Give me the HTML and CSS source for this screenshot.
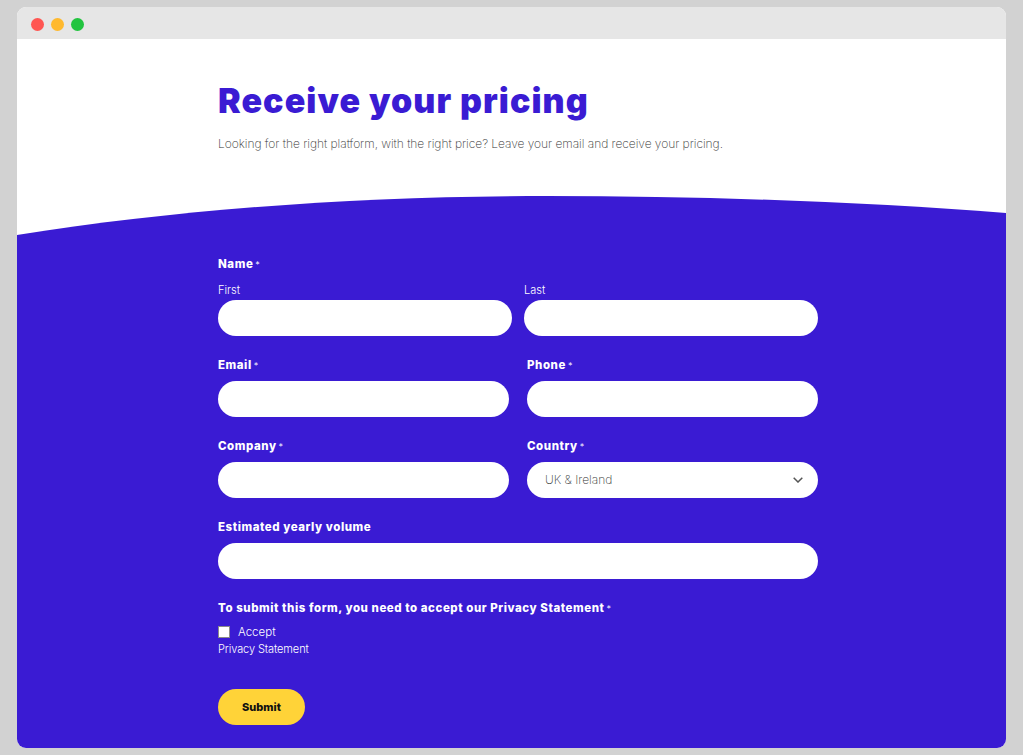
FILE: index.html
```html
<html>

<head>
  <meta charset="utf-8" />
  <meta name="viewport" content="width=device-width, initial-scale=1" />
  <title>Receive your pricing</title>
  <link rel="stylesheet" href="styles.css">
</head>

<body>
  <div class="window">
    <div class="titlebar">
      <span class="dot red"></span>
      <span class="dot yellow"></span>
      <span class="dot green"></span>
    </div>

    <div class="hero">
      <h1>Receive your pricing</h1>
      <p>Looking for the right platform, with the right price? Leave your email and receive your pricing.</p>
    </div>

    <svg class="wave" viewBox="0 0 989 40" preserveAspectRatio="none">
      <path d="M0 39C170 12 350 0 530 0C690 0 850 6 989 17V40H0Z" fill="#3a1bd3" />
    </svg>

    <form class="pricing">
      <div class="fields">
        <div class="field">
          <div class="lbl">Name<span class="req">*</span></div>
          <div class="names">
            <div>
              <div class="sublbl">First</div>
              <input type="text" />
            </div>
            <div>
              <div class="sublbl">Last</div>
              <input type="text" />
            </div>
          </div>
        </div>

        <div class="cols">
          <div class="field">
            <div class="lbl">Email<span class="req">*</span></div>
            <input type="text" />
          </div>
          <div class="field">
            <div class="lbl">Phone<span class="req">*</span></div>
            <input type="text" />
          </div>
        </div>

        <div class="cols">
          <div class="field">
            <div class="lbl">Company<span class="req">*</span></div>
            <input type="text" />
          </div>
          <div class="field">
            <div class="lbl">Country<span class="req">*</span></div>
            <div class="selectwrap">
              <select>
                <option>UK &amp; Ireland</option>
              </select>
              <svg class="chevron" viewBox="0 0 10 6">
                <path d="M0.7 0.7L5 5L9.3 0.7" fill="none" stroke="#555" stroke-width="1.5" />
              </svg>
            </div>
          </div>
        </div>

        <div class="field">
          <div class="lbl">Estimated yearly volume</div>
          <input type="text" />
        </div>

        <div class="lbl">To submit this form, you need to accept our Privacy Statement<span class="req">*</span></div>
        <label class="accept"><input type="checkbox" class="check" />Accept</label>
        <a class="privacy" href="#">Privacy Statement</a>

        <button type="button" class="submit">Submit</button>
      </div>
    </form>
  </div>
</body>

</html>
```

FILE: styles.css
```css
body {
  background: #d2d2d2;
  margin: 0;
  padding: 7px 17px;
  height: 755px;
  box-sizing: border-box;
  overflow: hidden;
  font: 300 12px Inter, "Liberation Sans", sans-serif;
}

.window {
  width: 989px;
  height: 741px;
  background: #fff;
  border-radius: 9px;
  overflow: hidden;
}

.titlebar {
  height: 32px;
  background: #e6e6e6;
  display: flex;
  align-items: center;
  gap: 7px;
  padding-left: 14px;
  padding-top: 2px;
  box-sizing: border-box;
}

.dot {
  width: 13px;
  height: 13px;
  border-radius: 50%;
}

.red {
  background: #ff5652;
}

.yellow {
  background: #ffb92e;
}

.green {
  background: #22c43f;
}

.hero {
  padding: 40px 0 43px 201px;
  color: #333;
}

.hero h1 {
  margin: 0 0 12px;
  font-size: 34px;
  line-height: 44px;
  font-weight: 900;
  letter-spacing: 1.05px;
  color: #3a1bd3;
}

.hero p {
  margin: 0;
  font-size: 12px;
  line-height: 18px;
  font-weight: 200;
  letter-spacing: -0.04px;
}

.wave {
  display: block;
  width: 989px;
  height: 40px;
}

.pricing {
  display: block;
  height: 512px;
  box-sizing: border-box;
  background: #3a1bd3;
  padding: 20px 0 0 201px;
  color: #fff;
}

.fields {
  width: 600px;
}

.pricing input[type="text"],
.pricing select {
  display: block;
  width: 100%;
  height: 36px;
  box-sizing: border-box;
  border: 0;
  border-radius: 18px;
  background: #fff;
  padding: 0 18px;
  font: 200 12px Inter, "Liberation Sans", sans-serif;
  color: #333;
  appearance: none;
}

.pricing select {
  padding-bottom: 2px;
}

.field {
  margin-bottom: 21px;
}

.lbl {
  font-size: 11.5px;
  line-height: 16px;
  font-weight: 800;
  letter-spacing: 0.55px;
}

.field>.lbl {
  margin-bottom: 8px;
}

.req {
  font-weight: 300;
  font-size: 9px;
  line-height: 0;
  margin-left: 2px;
}

.names {
  display: grid;
  grid-template-columns: 294px 294px;
  gap: 12px;
  padding-top: 3px;
}

.sublbl {
  font-size: 11px;
  line-height: 14px;
  margin-bottom: 3px;
}

.cols {
  display: grid;
  grid-template-columns: 291px 291px;
  gap: 18px;
}

.selectwrap {
  position: relative;
}

.chevron {
  position: absolute;
  right: 15px;
  top: 15px;
  width: 10px;
  height: 6px;
}

.accept {
  display: flex;
  align-items: center;
  height: 16px;
  margin-top: 8px;
  font-size: 11.5px;
}

.check {
  appearance: none;
  width: 12px;
  height: 12px;
  margin: 0 8px 0 0;
  background: #fff;
  border: 1px solid #8a8a8a;
  box-sizing: border-box;
}

.privacy {
  display: block;
  margin-top: 1px;
  font-size: 11px;
  letter-spacing: -0.1px;
  line-height: 16px;
  color: #fff;
  text-decoration: none;
}

.submit {
  display: block;
  width: 87px;
  height: 36px;
  margin-top: 32px;
  border: 0;
  border-radius: 18px;
  background: #ffd338;
  color: #111;
  font: 800 11px Inter, "Liberation Sans", sans-serif;
}
```
